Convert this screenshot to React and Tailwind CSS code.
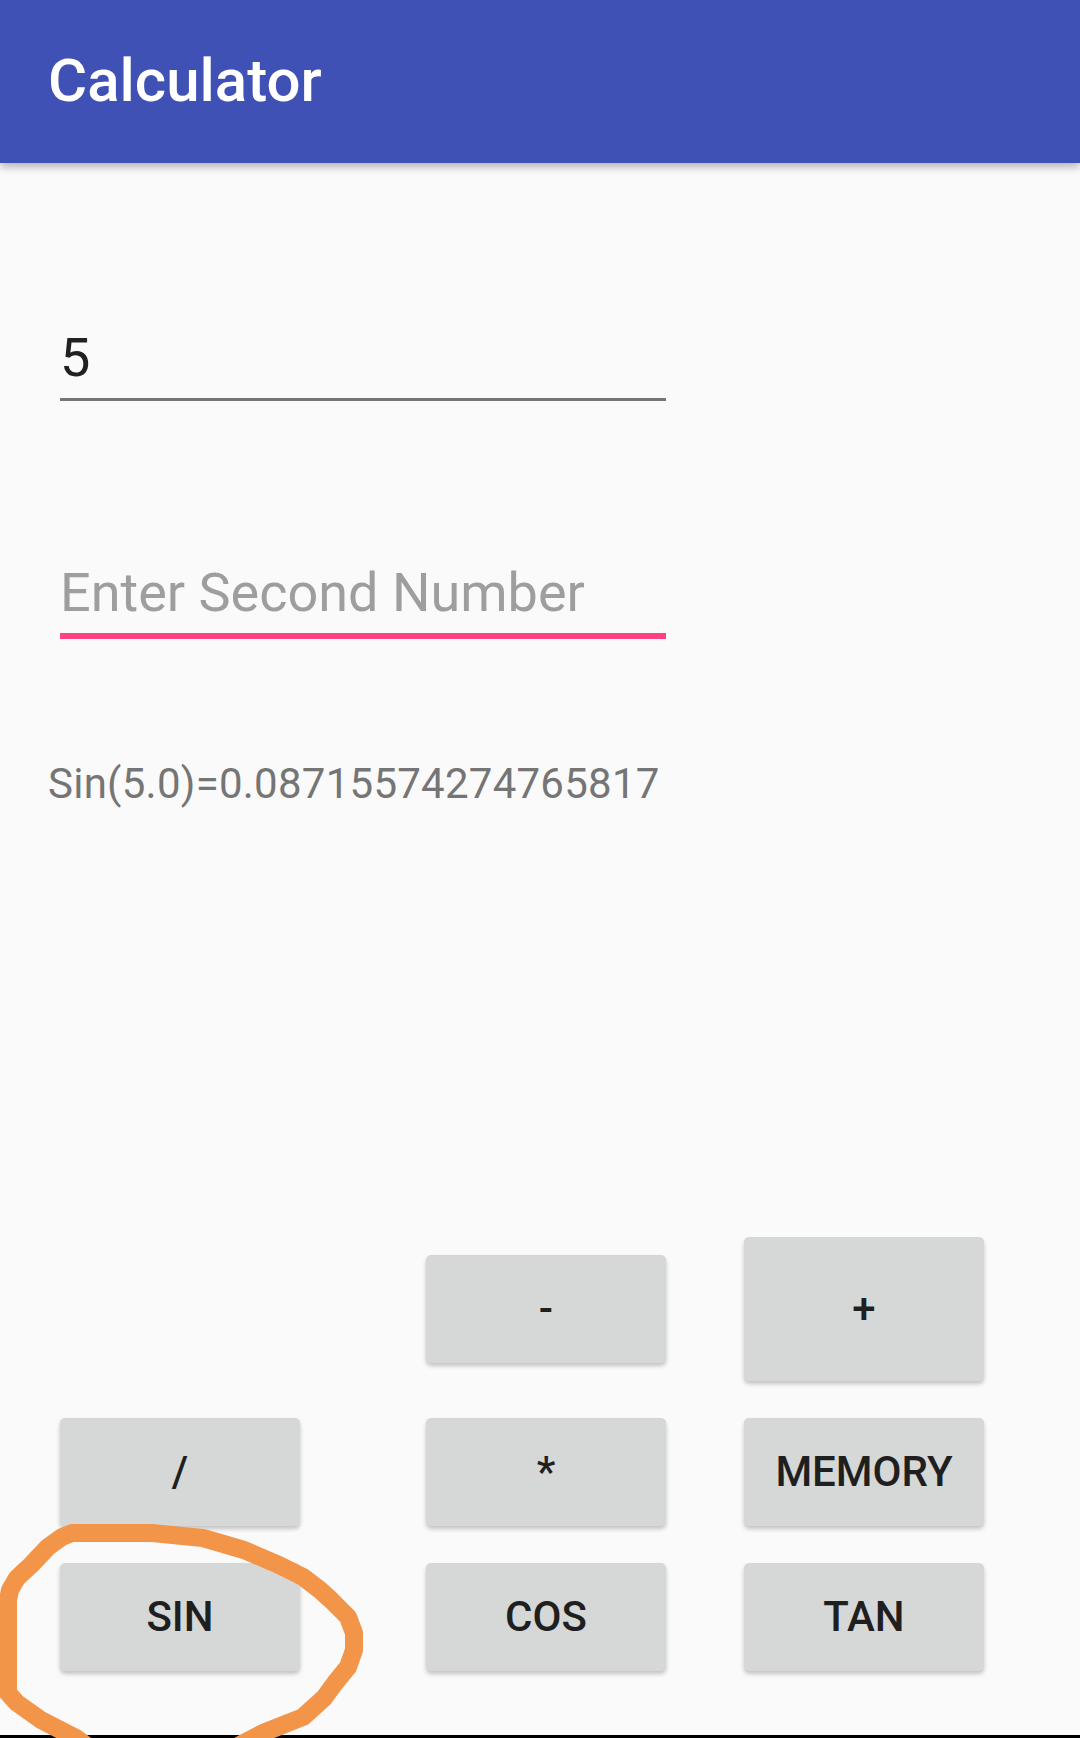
const Btn = ({ label, tall }) => (
  <div
    className={
      tall
        ? "h-[144px] w-[240px] bg-[#d6d7d7] rounded-[5px] shadow-[0_3px_4px_rgba(0,0,0,0.22)] flex items-center justify-center text-[42px] leading-none font-medium text-[#1f1f1f]"
        : "h-[108px] w-[240px] bg-[#d6d7d7] rounded-[5px] shadow-[0_3px_4px_rgba(0,0,0,0.22)] flex items-center justify-center text-[42px] leading-none font-medium text-[#1f1f1f]"
    }
  >
    {label}
  </div>
);

const App = () => {
  return (
    <div className="relative w-[1080px] h-[1738px] bg-[#fafafa] font-['Roboto',sans-serif] flex flex-col overflow-hidden">
      {/* app bar */}
      <header className="relative z-10 h-[163px] shrink-0 bg-[#3f51b5] px-[48px] pt-[51px] shadow-[0_4px_8px_rgba(0,0,0,0.28)]">
        <h1 className="text-white text-[60px] leading-[60px] font-medium">Calculator</h1>
      </header>

      <main className="flex-1 flex flex-col px-[60px]">
        {/* first number */}
        <div className="w-[606px] mt-[168px]">
          <div className="text-[54px] leading-[54px] text-[#212121]">5</div>
          <div className="mt-[13px] h-[3px] bg-[#757575]" />
        </div>

        {/* second number */}
        <div className="w-[606px] mt-[165px]">
          <div className="text-[54px] leading-[54px] text-[#9e9e9e]">Enter Second Number</div>
          <div className="mt-[13px] h-[6px] bg-[#ff4081]" />
        </div>

        {/* result */}
        <div className="mt-[124px] -ml-[12px] text-[42px] leading-[42px] tracking-[0.25px] text-[#757575]">
          Sin(5.0)=0.08715574274765817
        </div>

        {/* keypad */}
        <div className="mt-[432px] flex flex-col gap-[37px]">
          <div className="flex items-center h-[144px]">
            <div className="w-[240px]" />
            <div className="ml-[126px]">
              <Btn label="-" />
            </div>
            <div className="ml-[78px]">
              <Btn label="+" tall />
            </div>
          </div>
          <div className="flex items-center">
            <Btn label="/" />
            <div className="ml-[126px]">
              <Btn label="*" />
            </div>
            <div className="ml-[78px]">
              <Btn label="MEMORY" />
            </div>
          </div>
          <div className="flex items-center">
            <Btn label="SIN" />
            <div className="ml-[126px]">
              <Btn label="COS" />
            </div>
            <div className="ml-[78px]">
              <Btn label="TAN" />
            </div>
          </div>
        </div>
      </main>

      <div className="h-[3px] bg-black shrink-0" />

      {/* hand-drawn highlight */}
      <svg
        className="absolute inset-0 z-20 pointer-events-none"
        width="1080"
        height="1738"
        viewBox="0 0 1080 1738"
      >
        <path
          d="M 95 1752 L 76 1738 L 41 1720 L 17 1703 L 8 1693 L 8 1600 L 10 1590 L 17 1578 L 31 1565 L 48 1547 L 62 1537 L 72 1533 L 152 1533 L 203 1538 L 244 1550 L 279 1565 L 303 1577 L 320 1590 L 331 1600 L 348 1617 L 354 1633 L 354 1650 L 348 1667 L 335 1683 L 324 1698 L 303 1717 L 265 1732 L 240 1745"
          fill="none"
          stroke="#f39549"
          strokeWidth="18"
          strokeLinejoin="round"
          strokeLinecap="round"
        />
      </svg>
    </div>
  );
};

export default App;
